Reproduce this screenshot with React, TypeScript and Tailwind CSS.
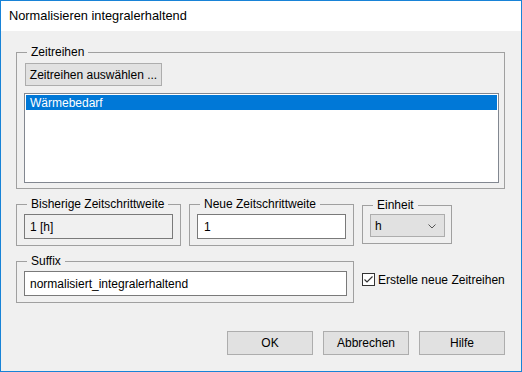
import React from "react";

function Group({
  label,
  className,
  children,
}: {
  label: string;
  className: string;
  children?: React.ReactNode;
}) {
  return (
    <div className={"relative border border-[#a0a0a0] " + className}>
      <span className="absolute left-[10px] top-[-8px] px-[4px] bg-[#f0f0f0] leading-[14px] text-[12px] text-black">
        {label}
      </span>
      {children}
    </div>
  );
}

export default function App() {
  return (
    <div
      className="w-[522px] h-[372px] border border-[#1883d7] flex flex-col bg-[#f0f0f0] text-[12px] text-black"
      style={{ fontFamily: '"Liberation Sans", Arial, sans-serif' }}
    >
      <div className="h-[30px] bg-white pl-[8px] flex items-center text-[12.8px] shrink-0">
        Normalisieren integralerhaltend
      </div>
      <div className="flex-1 pl-[15px] pt-[21px] flex flex-col">
        <Group label="Zeitreihen" className="w-[489px] h-[137px] pt-[10px] pl-[7px]">
          <button className="ml-[1px] w-[137px] h-[23px] bg-[#e1e1e1] border border-[#adadad] flex items-center justify-center leading-none">
            Zeitreihen auswählen ...
          </button>
          <div className="mt-[7px] w-[475px] h-[90px] border border-[#828790] bg-white p-[1px]">
            <div className="h-[15px] bg-[#0078d7] text-white pl-[4px] flex items-center leading-none">
              Wärmebedarf
            </div>
          </div>
        </Group>

        <div className="mt-[15px] flex items-start gap-[8px]">
          <Group label="Bisherige Zeitschrittweite" className="w-[165px] h-[42px] pt-[9px] pl-[7px]">
            <div className="w-[149px] h-[25px] border border-[#7a7a7a] bg-[#f0f0f0] pl-[5px] flex items-center leading-none">
              1 [h]
            </div>
          </Group>
          <Group label="Neue Zeitschrittweite" className="w-[165px] h-[42px] pt-[9px] pl-[7px]">
            <div className="w-[149px] h-[25px] border border-[#7a7a7a] bg-white pl-[6px] flex items-center leading-none">
              1
            </div>
          </Group>
          <Group label="Einheit" className="mt-[1px] w-[90px] h-[39px] pt-[8px] pl-[7px]">
            <div className="w-[75px] h-[23px] border border-[#adadad] bg-[#e1e1e1] pl-[4px] pr-[8px] flex items-center justify-between leading-none">
              <span>h</span>
              <svg width="8" height="5" viewBox="0 0 8 5" className="mt-[1px]">
                <path d="M0.5 0.5 L4 4 L7.5 0.5" fill="none" stroke="#555" strokeWidth="1" />
              </svg>
            </div>
          </Group>
        </div>

        <div className="mt-[15px] flex items-start">
          <Group label="Suffix" className="w-[338px] h-[42px] pt-[9px] pl-[7px]">
            <div className="w-[323px] h-[25px] border border-[#7a7a7a] bg-white pl-[5px] flex items-center leading-none">
              normalisiert_integralerhaltend
            </div>
          </Group>
          <div className="ml-[8px] mt-[12px] flex items-center">
            <div className="w-[13px] h-[13px] border border-[#333333] bg-white flex items-center justify-center">
              <svg width="11" height="11" viewBox="0 0 11 11">
                <path d="M1.5 5.5 L4 8 L9.5 2.5" fill="none" stroke="#333" strokeWidth="1.2" />
              </svg>
            </div>
            <span className="ml-[3px] leading-none">Erstelle neue Zeitreihen</span>
          </div>
        </div>

        <div className="mt-[28px] ml-[211px] flex gap-[10px]">
          <button className="w-[86px] h-[24px] bg-[#e1e1e1] border border-[#adadad] flex items-center justify-center leading-none">
            OK
          </button>
          <button className="w-[86px] h-[24px] bg-[#e1e1e1] border border-[#adadad] flex items-center justify-center leading-none">
            Abbrechen
          </button>
          <button className="w-[86px] h-[24px] bg-[#e1e1e1] border border-[#adadad] flex items-center justify-center leading-none">
            Hilfe
          </button>
        </div>
      </div>
    </div>
  );
}
